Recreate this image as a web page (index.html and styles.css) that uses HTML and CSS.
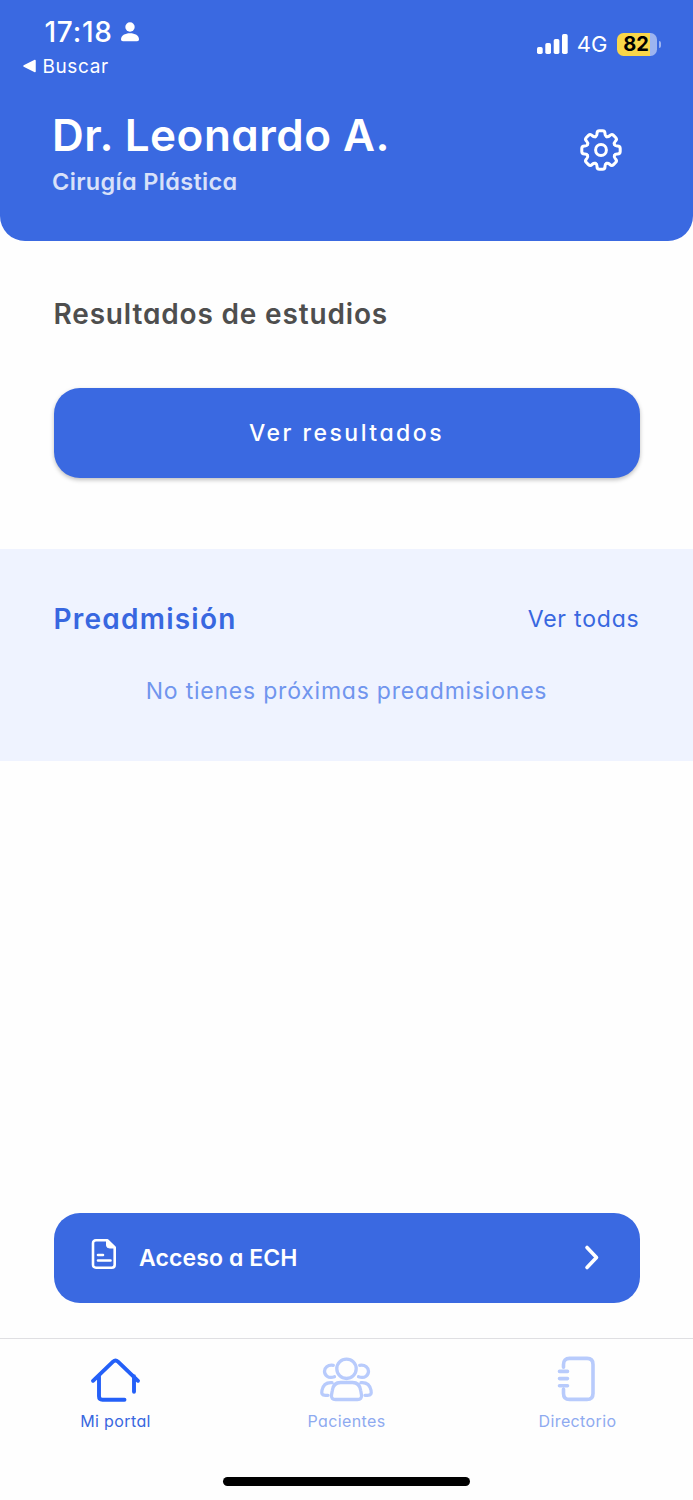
FILE: index.html
```html
<!DOCTYPE html>
<html lang="es">
<head>
<meta charset="utf-8">
<meta name="viewport" content="width=device-width, initial-scale=1">
<title>Mi portal</title>
<link rel="stylesheet" href="styles.css">
</head>
<body>
<div class="screen">
  <header class="header">
    <div class="status">
      <div class="status-left">
        <div class="clock">
          <span class="time">17:18</span>
          <svg class="person" width="18" height="20" viewBox="0 0 18 20" fill="#fff"><circle cx="9" cy="5" r="4.7"/><path d="M0 17.3C0 13.5 4 11.3 9 11.3s9 2.2 9 6c0 1.3-.7 2-2 2H2c-1.300 0-2-.7-2-2z"/></svg>
        </div>
        <div class="back">
          <svg width="13" height="14" viewBox="0 0 13 14"><path d="M1 7 12 1.500v11z" fill="#fff" stroke="#fff" stroke-width="1.500" stroke-linejoin="round"/></svg>
          <span class="back-label">Buscar</span>
        </div>
      </div>
      <div class="status-right">
        <svg width="31" height="20" viewBox="0 0 31 20" fill="#fff"><rect x="0" y="13" width="5.700" height="7" rx="1.700"/><rect x="8.300" y="9" width="5.700" height="11" rx="1.700"/><rect x="16.700" y="5" width="5.700" height="15" rx="1.700"/><rect x="25" y="0" width="5.700" height="20" rx="1.700"/></svg>
        <span class="network">4G</span>
        <div class="battery"><span class="battery-body">82</span><span class="battery-cap"></span></div>
      </div>
    </div>
    <div class="profile">
      <div>
        <h1 class="name">Dr. Leonardo A.</h1>
        <p class="specialty">Cirugía Plástica</p>
      </div>
      <svg class="gear" width="42" height="42" viewBox="-21 -21 42 42" fill="none" stroke="#fff" stroke-width="3" stroke-linecap="round" stroke-linejoin="round">
        <defs><path id="tooth" d="M-5.550-13.400Q-4-14.040-4-16V-16.400Q-4-19.200-1.500-19.200H1.500Q4-19.200 4-16.400V-16Q4-14.040 5.550-13.400"/></defs>
        <circle r="5.400"/>
        <use href="#tooth"/><use href="#tooth" transform="rotate(45)"/><use href="#tooth" transform="rotate(90)"/><use href="#tooth" transform="rotate(135)"/><use href="#tooth" transform="rotate(180)"/><use href="#tooth" transform="rotate(225)"/><use href="#tooth" transform="rotate(270)"/><use href="#tooth" transform="rotate(315)"/>
      </svg>
    </div>
  </header>

  <main class="main">
    <section class="results">
      <h2 class="heading results-title">Resultados de estudios</h2>
      <button class="button results-button">Ver resultados</button>
    </section>
    <section class="preadmission">
      <div class="preadmission-head">
        <h2 class="heading preadmission-title">Preadmisión</h2>
        <a class="see-all">Ver todas</a>
      </div>
      <p class="empty">No tienes próximas preadmisiones</p>
    </section>
    <button class="button access">
      <svg class="doc" width="26" height="32" viewBox="0 0 26 32" fill="none" stroke="#fff" stroke-width="2.600" stroke-linecap="round" stroke-linejoin="round"><path d="M5 2.300h11.500L23.700 9.500v17.200q0 3-3 3H5q-3 0-3-3V5.300q0-3 3-3z"/><path d="M15.500 2.500v4.500q0 3 3 3h5z" fill="#fff" stroke-width="1"/><path d="M7 17h5M7 22.500h12.500"/></svg>
      <span class="access-label">Acceso a ECH</span>
      <svg width="14" height="25" viewBox="0 0 14 25" fill="none" stroke="#fff" stroke-width="3.600" stroke-linecap="round" stroke-linejoin="round"><path d="M2 2.500 11.500 12.500 2 22.500"/></svg>
    </button>
  </main>

  <nav class="tabs">
    <a class="tab active">
      <svg width="50" height="46" viewBox="0.500 -0.300 50 46" fill="none" stroke="#2460f8" stroke-width="3.900" stroke-linecap="round" stroke-linejoin="round"><path d="M2.500 24.500 22.500 5.300q2.500-2.200 5 0L47.500 24.500M8.500 20v20q0 3.500 3.500 3.500h22M43.500 20v15.500"/></svg>
      <span class="tab-label">Mi portal</span>
    </a>
    <a class="tab">
      <svg width="54" height="46" viewBox="0.500 -0.300 54 46" fill="none" stroke="#b8cbfc" stroke-width="3.300" stroke-linecap="round"><circle cx="27" cy="12.500" r="9.700"/><path d="M21 26.200h12c5.500 0 7.500 3 8.200 8l.8 4.500c.4 3-1 4.500-4 4.500H16c-3 0-4.400-1.500-4-4.500l.8-4.500c.7-5 2.700-8 8.200-8zM13.800 9C8 8.200 5 11.500 5 15s3.300 7.800 10 5.500M40.200 9C46 8.200 49 11.500 49 15s-3.300 7.800-10 5.500M12.500 26.300C6 25.800 3.500 28.800 2.500 34c-.7 3.500 0 5 3.500 5h2.500M41.500 26.300C48 25.800 50.500 28.800 51.500 34c.7 3.500 0 5-3.500 5h-2.500"/></svg>
      <span class="tab-label">Pacientes</span>
    </a>
    <a class="tab">
      <svg width="38" height="46" viewBox="1.500 -0.200 38 46" fill="none" stroke="#b8cbfc" stroke-width="3.600" stroke-linecap="round"><path d="M6 11V8.200Q6 2.200 12 2.200h17.500q6 0 6 6v29q0 6-6 6H12q-6 0-6-6V33M2 15.200h8M2 22.400h8M2 29.500h8"/></svg>
      <span class="tab-label">Directorio</span>
    </a>
  </nav>
  <div class="home-indicator"></div>
</div>
</body>
</html>
```

FILE: styles.css
```css
* { box-sizing: border-box; margin: 0; padding: 0; }
body {
  background: #fefefe;
  font-family: Inter, "Liberation Sans", sans-serif;
  font-feature-settings: "cv11";
  font-optical-sizing: none;
}
svg { display: block; flex: none; overflow: visible; }
button { border: 0; font: inherit; font-feature-settings: inherit; }
span, h1, h2, p, a { white-space: nowrap; }

.screen { width: 693px; height: 1500px; display: flex; flex-direction: column; }

.header { height: 240.5px; flex: none; background: #3a69e1; border-radius: 0 0 25px 25px; color: #fff; }
.status { height: 110px; display: flex; justify-content: space-between; padding: 15px 32.500px 0 22.500px; font-feature-settings: normal; }
.clock { display: flex; align-items: center; gap: 8px; height: 33px; padding-left: 22px; }
.time { font-size: 28px; font-weight: 500; letter-spacing: .75px; }
.back { display: flex; align-items: center; gap: 7px; height: 26px; margin-top: 5px; }
.back-label { font-size: 19px; letter-spacing: .6px; }
.status-right { display: flex; align-items: center; height: 28px; margin-top: 15px; }
.network { margin-left: 9px; font-size: 22px; line-height: 28px; }
.battery { display: flex; align-items: center; gap: 2px; margin-left: 9px; }
.battery-body {
  width: 40px; height: 23px; border-radius: 6.5px; padding-right: 1px;
  background: linear-gradient(90deg, #f9d649 33px, #9db4f0 33px);
  color: #000; font-size: 20px; font-weight: 700; line-height: 23px; text-align: center;
}
.battery-cap { width: 2px; height: 7px; border-radius: 0 2px 2px 0; background: #9db4f0; }

.profile { display: flex; justify-content: space-between; align-items: flex-start; padding: 0 71px 0 52px; }
.name { font-size: 44px; font-weight: 600; line-height: 50px; letter-spacing: .5px; }
.specialty { margin-top: 7px; color: #d8e1f9; font-size: 23.5px; font-weight: 600; line-height: 30px; letter-spacing: .33px; }
.gear { margin-top: 19px; }

.main { flex: 1; display: flex; flex-direction: column; }
.heading { font-size: 28px; font-weight: 600; line-height: 36px; }
.results { height: 308px; padding: 55.5px 53.5px 0; }
.results-title { color: #4e4e4e; letter-spacing: .84px; }
.button { background: #3a69e1; color: #fff; border-radius: 26px; height: 90px; }
.results-button {
  display: block; width: 100%; margin-top: 55.5px;
  font-size: 23px; font-weight: 450; letter-spacing: 2.5px;
  box-shadow: 0 2px 4px rgba(0, 0, 0, .25);
}
.preadmission { height: 212px; background: #eff3ff; padding: 52.500px 53.500px 0; }
.preadmission-head { display: flex; justify-content: space-between; align-items: center; height: 36px; }
.preadmission-title, .see-all { color: #3867e0; }
.preadmission-title { letter-spacing: 1.23px; }
.see-all { font-size: 23px; letter-spacing: .8px; }
.empty { margin-top: 39px; color: #7095ee; font-size: 23px; line-height: 30px; letter-spacing: .78px; text-align: center; }
.access { display: flex; align-items: center; margin: auto 53.500px 35.500px; padding: 0 40.500px 0 37.500px; }
.doc { margin-top: -7px; }
.access-label { flex: 1; margin-left: 22px; text-align: left; font-size: 23px; font-weight: 600; letter-spacing: .1px; }

.tabs { height: 122px; flex: none; display: grid; grid-template-columns: repeat(3, 1fr); border-top: 1px solid #dfdfe2; }
.tab { display: flex; flex-direction: column; align-items: center; padding-top: 17px; color: #8eaaf0; }
.active { color: #3867e0; }
.tab-label { margin-top: 9px; font-size: 16px; line-height: 20px; letter-spacing: .38px; }
.home-indicator { width: 247px; height: 9px; flex: none; margin: 16.500px auto 14.500px; border-radius: 5px; background: #000; }
```
